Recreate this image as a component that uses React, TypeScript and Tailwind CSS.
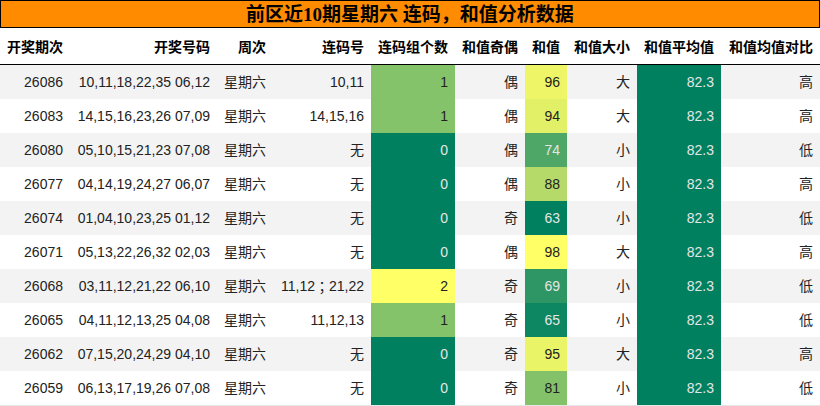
import React from "react";

type Row = {
  id: string;
  nums: string;
  week: string;
  lian: React.ReactNode;
  cnt: string;
  cntBg: string;
  cntDark: boolean;
  oe: string;
  sum: string;
  sumBg: string;
  sumDark: boolean;
  size: string;
  cmp: string;
};

const CNT0 = "bg-[#00805f]";
const CNT1 = "bg-[#84c36a]";
const CNT2 = "bg-[#ffff66]";

const rows: Row[] = [
  { id: "26086", nums: "10,11,18,22,35 06,12", week: "星期六", lian: "10,11", cnt: "1", cntBg: CNT1, cntDark: false, oe: "偶", sum: "96", sumBg: "bg-[#eef667]", sumDark: false, size: "大", cmp: "高" },
  { id: "26083", nums: "14,15,16,23,26 07,09", week: "星期六", lian: "14,15,16", cnt: "1", cntBg: CNT1, cntDark: false, oe: "偶", sum: "94", sumBg: "bg-[#e2f068]", sumDark: false, size: "大", cmp: "高" },
  { id: "26080", nums: "05,10,15,21,23 07,08", week: "星期六", lian: "无", cnt: "0", cntBg: CNT0, cntDark: true, oe: "偶", sum: "74", sumBg: "bg-[#4fa767]", sumDark: true, size: "小", cmp: "低" },
  { id: "26077", nums: "04,14,19,24,27 06,07", week: "星期六", lian: "无", cnt: "0", cntBg: CNT0, cntDark: true, oe: "偶", sum: "88", sumBg: "bg-[#b6da69]", sumDark: false, size: "小", cmp: "高" },
  { id: "26074", nums: "01,04,10,23,25 01,12", week: "星期六", lian: "无", cnt: "0", cntBg: CNT0, cntDark: true, oe: "奇", sum: "63", sumBg: "bg-[#00805f]", sumDark: true, size: "小", cmp: "低" },
  { id: "26071", nums: "05,13,22,26,32 02,03", week: "星期六", lian: "无", cnt: "0", cntBg: CNT0, cntDark: true, oe: "偶", sum: "98", sumBg: "bg-[#ffff66]", sumDark: false, size: "大", cmp: "高" },
  {
    id: "26068",
    nums: "03,11,12,21,22 06,10",
    week: "星期六",
    lian: (
      <>
        11,12
        <span style={{ fontFamily: '"Noto Sans CJK JP", "Noto Sans CJK TC", sans-serif' }}>；</span>
        21,22
      </>
    ),
    cnt: "2",
    cntBg: CNT2,
    cntDark: false,
    oe: "奇",
    sum: "69",
    sumBg: "bg-[#2e9664]",
    sumDark: true,
    size: "小",
    cmp: "低",
  },
  { id: "26065", nums: "04,11,12,13,25 04,08", week: "星期六", lian: "11,12,13", cnt: "1", cntBg: CNT1, cntDark: false, oe: "奇", sum: "65", sumBg: "bg-[#0d8662]", sumDark: true, size: "小", cmp: "低" },
  { id: "26062", nums: "07,15,20,24,29 04,10", week: "星期六", lian: "无", cnt: "0", cntBg: CNT0, cntDark: true, oe: "奇", sum: "95", sumBg: "bg-[#e9f467]", sumDark: false, size: "大", cmp: "高" },
  { id: "26059", nums: "06,13,17,19,26 07,08", week: "星期六", lian: "无", cnt: "0", cntBg: CNT0, cntDark: true, oe: "奇", sum: "81", sumBg: "bg-[#84c26a]", sumDark: false, size: "小", cmp: "低" },
];

const headers = ["开奖期次", "开奖号码", "周次", "连码号", "连码组个数", "和值奇偶", "和值", "和值大小", "和值平均值", "和值均值对比"];

const GRID = "grid grid-cols-[70px_147px_56px_98px_84px_70px_42px_70px_84px_99px]";

function Cell({ children, className = "" }: { children: React.ReactNode; className?: string }) {
  return (
    <div className={`flex items-center justify-end pr-[7px] whitespace-nowrap ${className}`}>
      {children}
    </div>
  );
}

export default function App() {
  return (
    <div
      className="w-[820px] h-[406px] bg-white overflow-hidden"
      style={{ fontFamily: '"Liberation Sans", "Noto Sans CJK SC", sans-serif' }}
    >
      <div
        className="h-[28px] border border-black bg-[#ff8c00] flex items-center justify-center pt-[2px] text-[19px] font-bold text-black"
        style={{ fontFamily: '"Liberation Serif", "Noto Sans CJK SC", serif' }}
      >
        前区近10期星期六 连码，和值分析数据
      </div>
      <div className={`${GRID} h-[37px] border-b border-black text-[14px] font-bold text-black`}>
        {headers.map((h) => (
          <Cell key={h} className="pt-[3px]">
            {h}
          </Cell>
        ))}
      </div>
      <div className="text-[14px] text-[#222]">
        {rows.map((r, i) => (
          <div key={r.id} className={`${GRID} h-[34px] ${i % 2 === 0 ? "bg-[#f3f3f3]" : "bg-white"}`}>
            <Cell>{r.id}</Cell>
            <Cell>{r.nums}</Cell>
            <Cell>{r.week}</Cell>
            <Cell>{r.lian}</Cell>
            <Cell className={`${r.cntBg} ${r.cntDark ? "text-[#e6e6e6]" : ""}`}>{r.cnt}</Cell>
            <Cell>{r.oe}</Cell>
            <Cell className={`${r.sumBg} ${r.sumDark ? "text-[#e6e6e6]" : ""}`}>{r.sum}</Cell>
            <Cell>{r.size}</Cell>
            <Cell className="bg-[#00805f] text-[#e6e6e6]">82.3</Cell>
            <Cell>{r.cmp}</Cell>
          </div>
        ))}
      </div>
      <div className="h-px bg-[#e5e5e5]" />
    </div>
  );
}
